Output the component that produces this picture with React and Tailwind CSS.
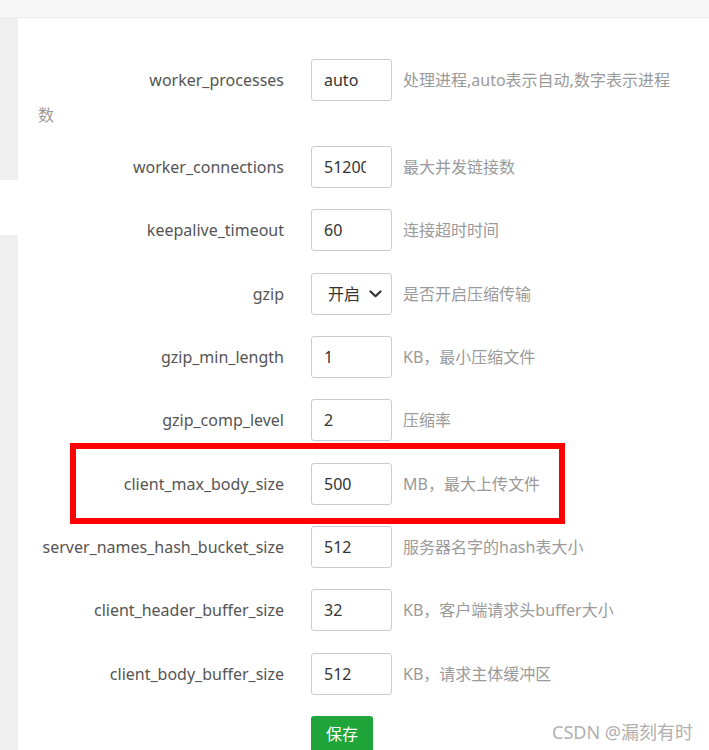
import React from 'react';

const rows = [
    { label: 'worker_connections', value: '51200', desc: '最大并发链接数' },
    { label: 'keepalive_timeout', value: '60', desc: '连接超时时间' },
    { label: 'gzip', value: '开启', desc: '是否开启压缩传输', select: true },
    { label: 'gzip_min_length', value: '1', desc: 'KB，最小压缩文件' },
    { label: 'gzip_comp_level', value: '2', desc: '压缩率' },
    { label: 'client_max_body_size', value: '500', desc: 'MB，最大上传文件' },
    { label: 'server_names_hash_bucket_size', value: '512', desc: '服务器名字的hash表大小' },
    { label: 'client_header_buffer_size', value: '32', desc: 'KB，客户端请求头buffer大小' },
    { label: 'client_body_buffer_size', value: '512', desc: 'KB，请求主体缓冲区' },
];

const inputCls =
    'w-[81px] h-[42px] border border-[#cccccc] rounded-[3px] bg-white pl-[12px] pr-[25px] text-[16px] text-[#333] outline-none';

function Field({ row }) {
    if (row.select) {
        return (
            <div className="w-[81px] h-[42px] border border-[#cccccc] rounded-[3px] bg-white flex items-center justify-between pl-[16px] pr-[9px] text-[16px] text-[#333]">
                <span>{row.value}</span>
                <svg width="13" height="8" viewBox="0 0 13 8" fill="none">
                    <path d="M1.5 1.5L6.5 6.2L11.5 1.5" stroke="#333" strokeWidth="2.2" strokeLinecap="round" strokeLinejoin="round" />
                </svg>
            </div>
        );
    }
    return <input readOnly value={row.value} className={inputCls} />;
}

export default function App() {
    return (
        <div
            className="relative w-[709px] h-[750px] overflow-hidden bg-white"
            style={{ fontFamily: '"Noto Sans", "Noto Sans CJK SC", sans-serif' }}
        >
            {/* top strip */}
            <div className="h-[18px] bg-[#f7f7f7] border-b border-[#ececec]" />

            <div className="flex h-[732px]">
                {/* sidebar edge */}
                <div className="w-[18px] flex flex-col">
                    <div className="h-[162px] bg-[#efefef]" />
                    <div className="h-[55px] bg-white" />
                    <div className="flex-1 bg-[#efefef]" />
                </div>

                {/* config form */}
                <div className="flex-1 pl-[20px] pr-[28px] pt-[41px]">
                    <div className="leading-[24px] text-[16px]">
                        <span className="inline-block w-[246px] text-right align-middle text-[#555]">worker_processes</span>
                        <input readOnly value="auto" className={inputCls + ' inline-block align-middle ml-[27px]'} />
                        <span className="ml-[11px] align-middle text-[#9a9a9a]">处理进程,auto表示自动,数字表示进程数</span>
                    </div>

                    <div className="mt-[19px] flex flex-col gap-[21.4px]">
                        {rows.map((row) => (
                            <div key={row.label} className="flex items-center h-[42px]">
                                <div className="w-[246px] text-right text-[16px] text-[#555] whitespace-nowrap">{row.label}</div>
                                <div className="ml-[27px]">
                                    <Field row={row} />
                                </div>
                                <div className="ml-[11px] text-[16px] text-[#9a9a9a] whitespace-nowrap">{row.desc}</div>
                            </div>
                        ))}
                        <div className="flex h-[42px]">
                            <button className="ml-[273px] w-[62px] h-[36px] rounded-[3px] bg-[#20a53a] text-white text-[16px]">保存</button>
                        </div>
                    </div>
                </div>
            </div>

            {/* annotation */}
            <div className="absolute left-[70px] top-[443px] w-[495px] h-[81px] border-[6px] border-[#ff0000]" />

            {/* watermark */}
            <div className="absolute right-[16px] top-[720px] text-[18px] leading-[24px] text-[#b0b0b0]">CSDN @漏刻有时</div>
        </div>
    );
}
